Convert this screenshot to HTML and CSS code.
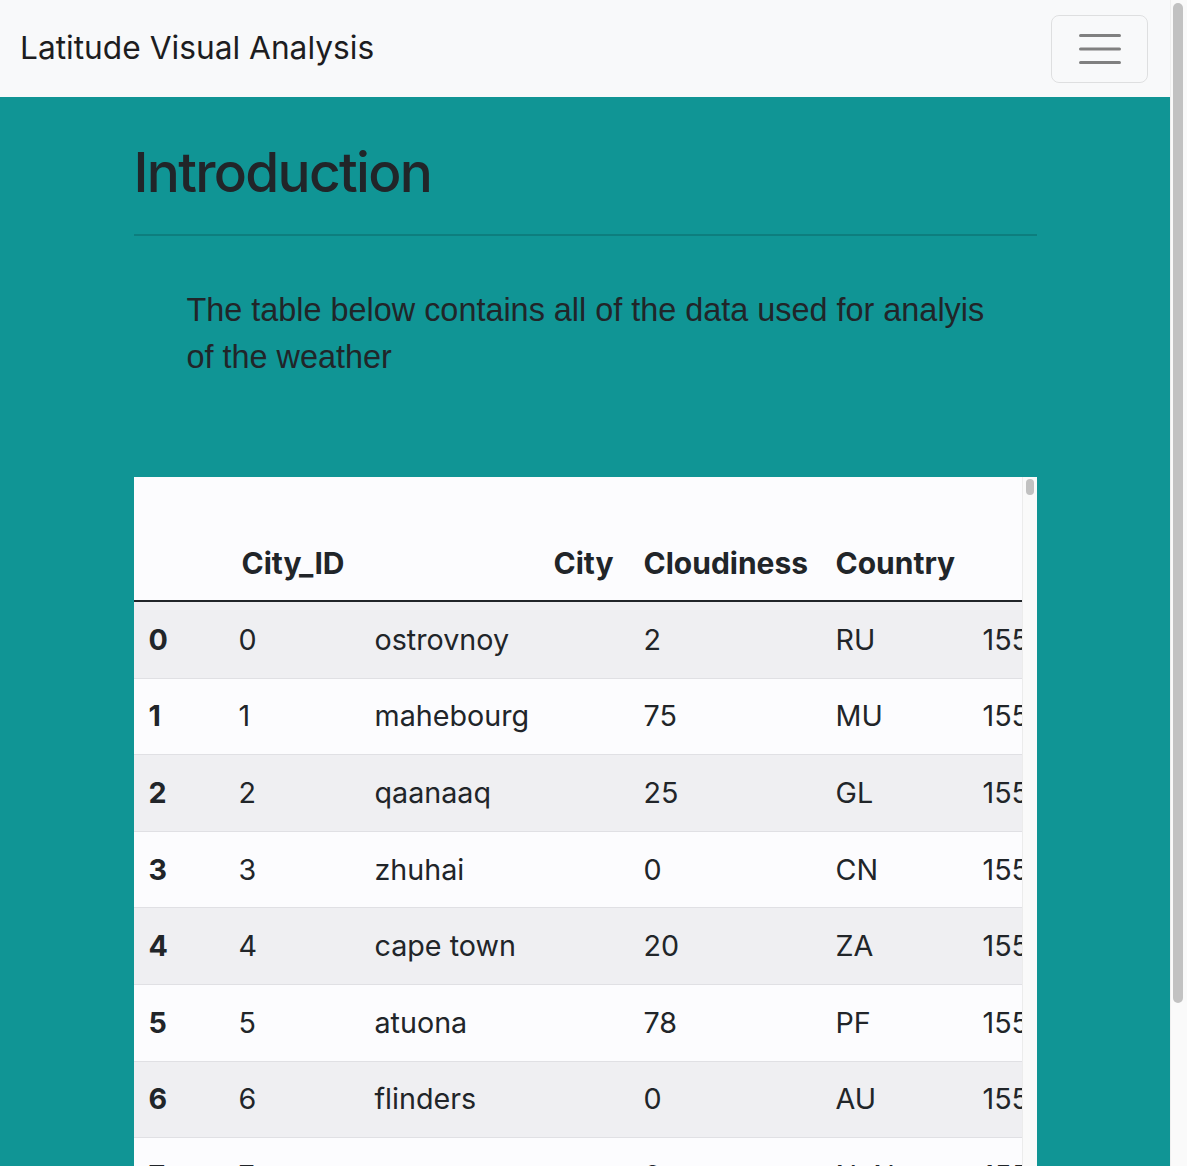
FILE: index.html
```html
<!DOCTYPE html>
<html lang="en">
<head>
<meta charset="utf-8">
<title>Latitude Visual Analysis</title>
<link rel="stylesheet" href="styles.css">
</head>
<body>
<div class="page">
  <nav class="navbar">
    <span class="brand">Latitude Visual Analysis</span>
    <button class="toggler" type="button" aria-label="Toggle navigation">
      <svg width="42" height="30" viewBox="0 0 42 30"><g stroke="#808080" stroke-width="3" stroke-linecap="round"><line x1="1.5" y1="1.5" x2="40.5" y2="1.5"/><line x1="1.5" y1="15" x2="40.5" y2="15"/><line x1="1.5" y1="28.5" x2="40.5" y2="28.5"/></g></svg>
    </button>
  </nav>
  <main class="main">
    <div class="container">
      <h1 class="title">Introduction</h1>
      <hr class="rule">
      <p class="lead">The table below contains all of the data used for analyis of the weather</p>
      <div class="table-wrap">
        <div class="table-clip">
          <table class="data">
            <colgroup>
              <col class="c-idx"><col class="c-id"><col class="c-city"><col class="c-cloud"><col class="c-country"><col class="c-date"><col class="c-hum"><col class="c-lat"><col class="c-lng"><col class="c-temp"><col class="c-wind">
            </colgroup>
            <thead>
              <tr><th></th><th>City_ID</th><th>City</th><th>Cloudiness</th><th>Country</th><th>Date</th><th>Humidity</th><th>Lat</th><th>Lng</th><th>Max Temp</th><th>Wind Speed</th></tr>
            </thead>
            <tbody>
              <tr><th>0</th><td>0</td><td>ostrovnoy</td><td>2</td><td>RU</td><td>1558378754</td><td>72</td><td>68.05</td><td>39.51</td><td>37.50</td><td>7.16</td></tr>
              <tr><th>1</th><td>1</td><td>mahebourg</td><td>75</td><td>MU</td><td>1558378503</td><td>74</td><td>-20.41</td><td>57.70</td><td>78.80</td><td>11.41</td></tr>
              <tr><th>2</th><td>2</td><td>qaanaaq</td><td>25</td><td>GL</td><td>1558378755</td><td>73</td><td>77.48</td><td>-69.36</td><td>22.20</td><td>2.37</td></tr>
              <tr><th>3</th><td>3</td><td>zhuhai</td><td>0</td><td>CN</td><td>1558378755</td><td>39</td><td>40.71</td><td>112.04</td><td>44.60</td><td>4.47</td></tr>
              <tr><th>4</th><td>4</td><td>cape town</td><td>20</td><td>ZA</td><td>1558378755</td><td>76</td><td>-33.93</td><td>18.42</td><td>55.99</td><td>8.05</td></tr>
              <tr><th>5</th><td>5</td><td>atuona</td><td>78</td><td>PF</td><td>1558378755</td><td>76</td><td>-9.80</td><td>-139.03</td><td>81.96</td><td>16.49</td></tr>
              <tr><th>6</th><td>6</td><td>flinders</td><td>0</td><td>AU</td><td>1558378755</td><td>62</td><td>-34.58</td><td>150.85</td><td>60.01</td><td>11.41</td></tr>
              <tr><th>7</th><td>7</td><td>opuwo</td><td>0</td><td>NaN</td><td>1558378523</td><td>23</td><td>-18.06</td><td>13.84</td><td>72.06</td><td>5.44</td></tr>
              <tr><th>8</th><td>8</td><td>tiksi</td><td>95</td><td>RU</td><td>1558378756</td><td>88</td><td>71.64</td><td>128.87</td><td>14.20</td><td>15.32</td></tr>
              <tr><th>9</th><td>9</td><td>pushkinskiye gory</td><td>6</td><td>RU</td><td>1558378756</td><td>61</td><td>57.02</td><td>28.91</td><td>40.44</td><td>6.93</td></tr>
            </tbody>
          </table>
        </div>
        <div class="tbar"><div class="tbar-thumb"></div></div>
      </div>
    </div>
  </main>
</div>
<div class="vbar"><div class="vbar-thumb"></div></div>
</body>
</html>
```
FILE: styles.css
```css
* { box-sizing: border-box; }

html, body { margin: 0; }

body {
  height: 100vh;
  overflow: hidden;
  display: flex;
  font-family: Inter, "Noto Sans", sans-serif;
  color: #212529;
  background: #109595;
}

.page {
  flex: 1;
  min-width: 0;
  height: 100vh;
  overflow: hidden;
}

/* page scrollbar */
.vbar {
  width: 17px;
  flex: none;
  background: #fafafa;
  border-left: 1px solid #efefef;
}

.vbar-thumb {
  height: 1000px;
  margin: 3px 4px 0 2px;
  border-radius: 5px;
  background: #c2c2c2;
}

.navbar {
  height: 97px;
  background: #f8f9fa;
  display: flex;
  align-items: center;
  justify-content: space-between;
  padding: 0 22px 0 20px;
}

.brand {
  font-size: 31.7px;
  line-height: 1.2;
  color: #1d1d1f;
}

.toggler {
  width: 97px;
  height: 68px;
  border: 1px solid rgba(0, 0, 0, 0.1);
  border-radius: 8px;
  background: transparent;
  display: flex;
  align-items: center;
  justify-content: center;
  padding: 0;
}

.main { padding: 40px 0 40px; }

.container { width: 903px; margin: 0 auto; }

.title {
  margin: 0;
  font-size: 55px;
  font-weight: 500;
  line-height: 71px;
  letter-spacing: -1.7px;
  padding-left: 0;
}

.rule {
  margin: 26px 0 0 0;
  border: 0;
  border-top: 2px solid rgba(0, 0, 0, 0.15);
}

.lead {
  margin: 51px 0 96px;
  padding: 0 30px 0 53px;
  font-family: "Liberation Sans", Arial, sans-serif;
  font-size: 32.4px;
  line-height: 47px;
}

.table-wrap {
  height: 845px;
  display: flex;
  background: #fcfcfe;
}

.table-clip {
  flex: 1;
  min-width: 0;
  overflow: hidden;
}

/* table scrollbar */
.tbar {
  width: 15px;
  flex: none;
  background: #fafafa;
  border-left: 1px solid #ececec;
}

.tbar-thumb {
  height: 16px;
  margin: 2px 3px 0 3px;
  border-radius: 4px;
  background: #c1c1c1;
}

.data {
  border-collapse: collapse;
  table-layout: fixed;
  width: 1754px;
  font-size: 28.7px;
  line-height: 42px;
}

.c-idx { width: 90px; }
.c-id { width: 136px; }
.c-city { width: 269px; }
.c-cloud { width: 192px; }
.c-country { width: 147px; }
.c-date { width: 190px; }
.c-hum { width: 160px; }
.c-lat { width: 120px; }
.c-lng { width: 130px; }
.c-temp { width: 150px; }
.c-wind { width: 170px; }

.data th, .data td {
  padding: 16.8px 15px;
  white-space: nowrap;
  overflow: hidden;
  text-align: left;
  font-weight: 400;
}

.data thead th {
  height: 124px;
  vertical-align: bottom;
  text-align: right;
  font-size: 30px;
  font-weight: 700;
  padding-bottom: 16px;
  border-bottom: 2px solid #212529;
}

.data tbody th, .data tbody td {
  border-top: 1px solid #e0e0e4;
  vertical-align: middle;
}

.data tbody th { font-weight: 700; }

.data tbody tr:nth-child(odd) { background: #efeff2; }
```
